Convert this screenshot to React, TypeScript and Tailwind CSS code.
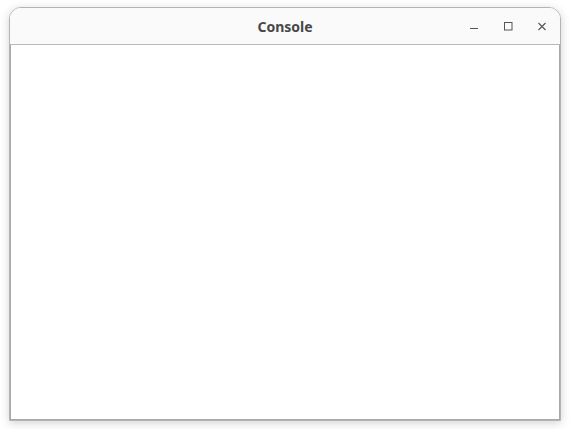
export default function App() {
  return (
    <div className="w-[570px] h-[429px] bg-white pl-[9px] pt-[7px]">
      <div className="w-[552px] h-[414px] flex flex-col rounded-t-[12px] border border-[#b4b4b4] bg-white shadow-[0_2px_10px_rgba(0,0,0,0.18)] overflow-hidden">
        <div className="h-[37px] shrink-0 relative flex items-center justify-center bg-[#fafafa] border-b border-[#b8b8b8]">
          <span className="font-['Noto_Sans',sans-serif] font-bold text-[14px] text-[#484848] mt-[1px]">Console</span>
          <div className="absolute right-[13px] top-[13px] h-[10px] flex items-start gap-[24px]">
            <svg width="10" height="10" viewBox="0 0 10 10">
              <line x1="1" y1="7.5" x2="9" y2="7.5" stroke="#555" strokeWidth="1" />
            </svg>
            <svg width="10" height="10" viewBox="0 0 10 10">
              <rect x="1.5" y="1.5" width="7.5" height="7.5" fill="none" stroke="#555" strokeWidth="1" />
            </svg>
            <svg width="10" height="10" viewBox="0 0 10 10">
              <path d="M1.5 2 L8.5 9 M8.5 2 L1.5 9" stroke="#555" strokeWidth="1.1" />
            </svg>
          </div>
        </div>
        <div className="flex-1 bg-white border-x border-b border-[#a8a8a8]" />
      </div>
    </div>
  );
}
